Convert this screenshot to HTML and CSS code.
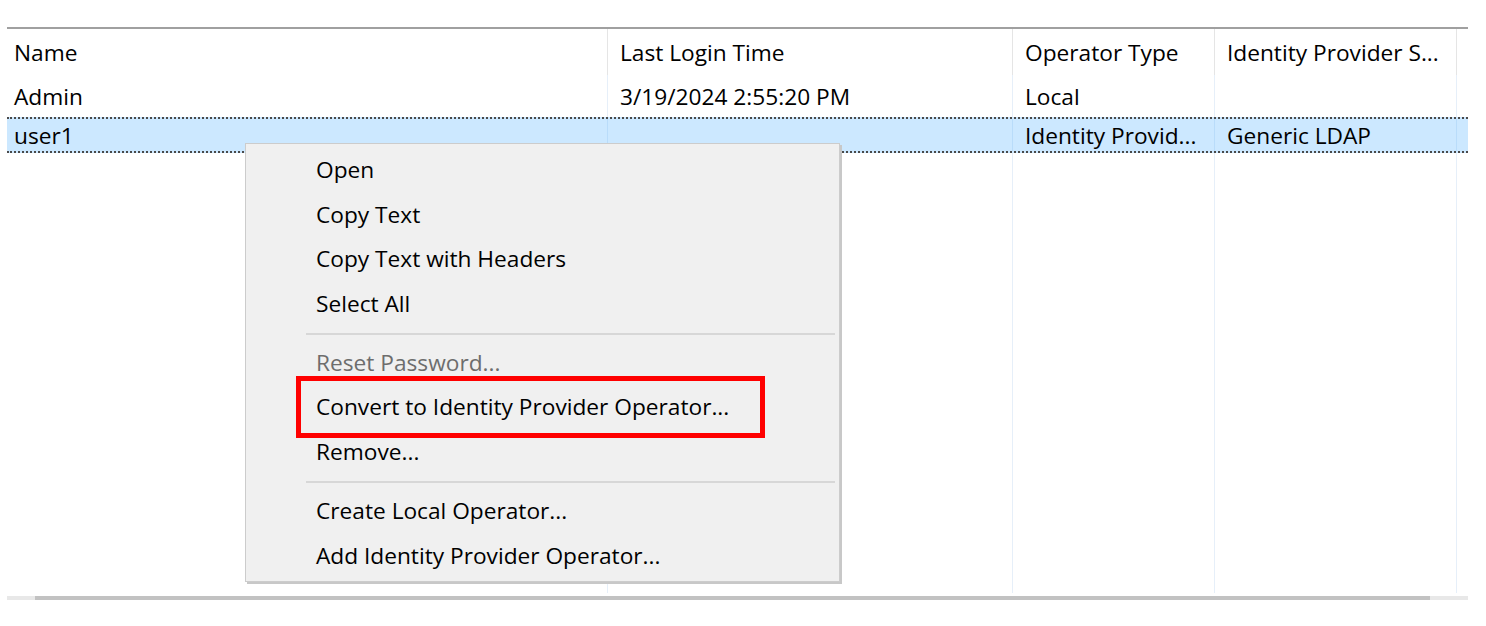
FILE: index.html
```html
<!DOCTYPE html>
<html lang="en">
<head>
    <meta charset="UTF-8">
    <title>Operators</title>
    <link rel="stylesheet" href="styles.css">
</head>
<body>
    <div class="list">
        <div class="row header">
            <div class="cell">Name</div>
            <div class="cell">Last Login Time</div>
            <div class="cell">Operator Type</div>
            <div class="cell">Identity Provider S...</div>
            <div class="cell"></div>
        </div>
        <div class="row admin">
            <div class="cell">Admin</div>
            <div class="cell">3/19/2024 2:55:20 PM</div>
            <div class="cell">Local</div>
            <div class="cell"></div>
            <div class="cell"></div>
        </div>
        <div class="row selected">
            <div class="cell">user1</div>
            <div class="cell"></div>
            <div class="cell">Identity Provid...</div>
            <div class="cell">Generic LDAP</div>
            <div class="cell"></div>
        </div>
        <div class="row filler">
            <div class="cell"></div>
            <div class="cell"></div>
            <div class="cell"></div>
            <div class="cell"></div>
            <div class="cell"></div>
        </div>
        <div class="scrollbar">
            <div class="thumb"></div>
        </div>
    </div>

    <div class="menu">
        <div class="item">Open</div>
        <div class="item">Copy Text</div>
        <div class="item">Copy Text with Headers</div>
        <div class="item">Select All</div>
        <div class="separator"></div>
        <div class="item disabled">Reset Password...</div>
        <div class="item">Convert to Identity Provider Operator...</div>
        <div class="item">Remove...</div>
        <div class="separator"></div>
        <div class="item">Create Local Operator...</div>
        <div class="item">Add Identity Provider Operator...</div>
    </div>

    <div class="highlight"></div>
</body>
</html>
```

FILE: styles.css
```css
* {
    margin: 0;
    padding: 0;
    box-sizing: border-box;
}

body {
    font-family: 'Open Sans', 'Noto Sans', sans-serif;
    font-size: 22.7px;
    color: #000;
    background: #fff;
    width: 1486px;
    height: 626px;
    overflow: hidden;
}

.list {
    margin: 27px 0 0 7px;
    width: 1461px;
    border-top: 2px solid #a0a0a0;
}

.row {
    display: grid;
    grid-template-columns: 601px 405px 202px 242px 1fr;
    align-items: stretch;
}

.cell {
    display: flex;
    align-items: center;
    padding-left: 12px;
    border-right: 1px solid #e6eff9;
    white-space: nowrap;
    overflow: hidden;
}

.cell:first-child {
    padding-left: 7px;
}

.cell:last-child {
    border-right: none;
}

.header {
    height: 46px;
}

.header .cell {
    border-right-color: #e5e5e5;
}

.admin {
    height: 42px;
}

.selected {
    height: 36px;
    background: #cce8ff;
    border-top: 2px dotted #4a4a4a;
    border-bottom: 2px dotted #4a4a4a;
}

.selected .cell {
    border-right-color: #b9dcfa;
}

.filler {
    height: 440px;
}

.scrollbar {
    margin-top: 3px;
    height: 4px;
    background: #e8e8e8;
    padding-left: 28px;
}

.thumb {
    width: 1395px;
    height: 4px;
    background: #c2c2c2;
}

/* context menu over the list */
.menu {
    position: absolute;
    left: 245px;
    top: 143px;
    width: 595px;
    height: 439px;
    background: #f0f0f0;
    border: 1px solid #cccccc;
    box-shadow: 2px 2px 0 #c8c8c8;
    padding: 4px 4px 4px 0;
}

.item {
    height: 44.7px;
    line-height: 44.7px;
    padding-left: 70px;
    white-space: nowrap;
}

.item.disabled {
    color: #6d6d6d;
}

.separator {
    height: 14px;
    padding-top: 6px;
    margin-left: 60px;
}

.separator::after {
    content: '';
    display: block;
    height: 2px;
    background: #d7d7d7;
}

/* annotation box */
.highlight {
    position: absolute;
    left: 296px;
    top: 376px;
    width: 469px;
    height: 62px;
    border: 5px solid #ff0000;
}
```
